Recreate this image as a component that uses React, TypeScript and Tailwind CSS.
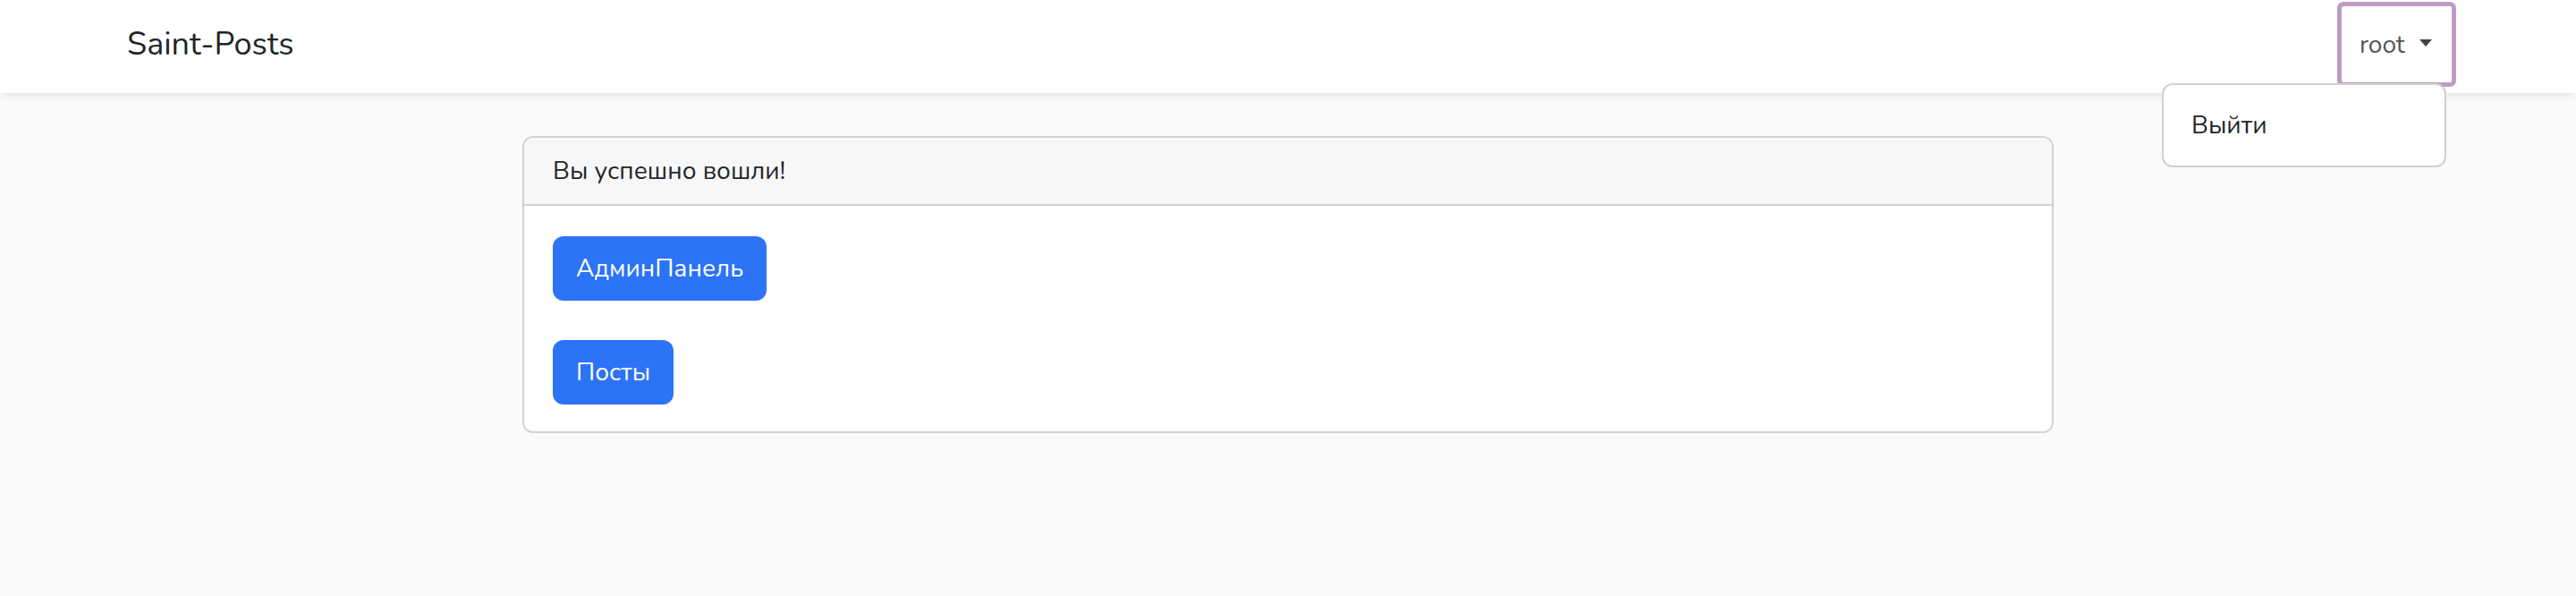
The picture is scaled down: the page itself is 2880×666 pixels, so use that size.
import { useState } from "react";

export default function App() {
  const [open] = useState(true);

  return (
    <div className="min-h-screen bg-[#f8fafc] font-['Nunito','Lato',sans-serif] text-[28px] leading-[46px] text-[#212529]">
      <nav className="relative z-10 flex h-[104px] items-center justify-between bg-white pb-[5px] pl-[142px] pr-[134px] shadow-[0_4px_8px_rgba(0,0,0,0.075)]">
        <a className="text-[36px] leading-none text-[#212529]">Saint-Posts</a>

        <div className="relative">
          <button className="flex h-[95px] w-[133px] items-center rounded-[7px] border-[5px] border-[#c09ac2] pl-[20px] text-[#555]">
            root
            <span className="ml-[16px] mt-[-3px] h-0 w-0 border-x-[7px] border-t-[8px] border-x-transparent border-t-[#444]" />
          </button>

          {open ? (
            <div className="absolute right-[11px] top-[91px] w-[318px] rounded-[12px] border-2 border-[#d0d0d0] bg-white py-[13px]">
              <a className="block px-[31px] py-[9px] text-[#212529]">Выйти</a>
            </div>
          ) : null}
        </div>
      </nav>

      <main className="flex justify-center pt-[48px]">
        <section className="w-[1712px] overflow-hidden rounded-[12px] border-2 border-[#d2d2d2] bg-white">
          <div className="border-b-2 border-[#d2d2d2] bg-[#f7f7f7] px-[32px] py-[14px]">Вы успешно вошли!</div>

          <div className="flex flex-col items-start gap-[44px] px-[32px] pb-[30px] pt-[34px]">
            <button className="h-[72px] rounded-[12px] bg-[#2c73f5] px-[26px] text-white">АдминПанель</button>
            <button className="h-[72px] rounded-[12px] bg-[#2c73f5] px-[26px] text-white">Посты</button>
          </div>
        </section>
      </main>
    </div>
  );
}
